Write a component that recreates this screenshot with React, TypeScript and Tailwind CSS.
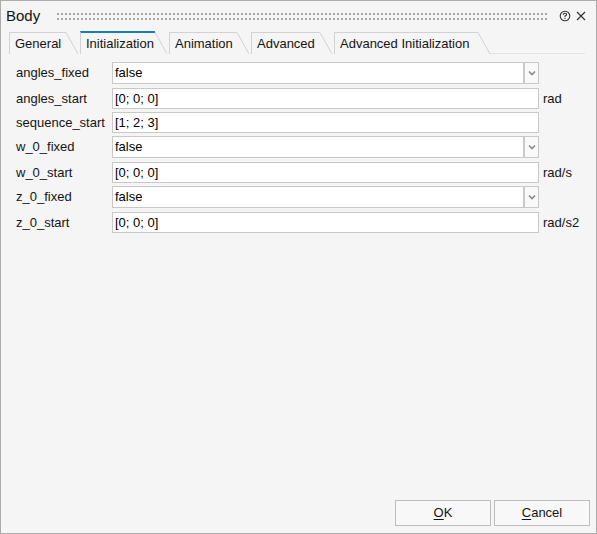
import React from 'react';

type Row = { label: string; value: string; kind: 'combo' | 'text'; unit?: string };

const rows: Row[] = [
  { label: 'angles_fixed', value: 'false', kind: 'combo' },
  { label: 'angles_start', value: '[0; 0; 0]', kind: 'text', unit: 'rad' },
  { label: 'sequence_start', value: '[1; 2; 3]', kind: 'text' },
  { label: 'w_0_fixed', value: 'false', kind: 'combo' },
  { label: 'w_0_start', value: '[0; 0; 0]', kind: 'text', unit: 'rad/s' },
  { label: 'z_0_fixed', value: 'false', kind: 'combo' },
  { label: 'z_0_start', value: '[0; 0; 0]', kind: 'text', unit: 'rad/s2' },
];

const tabs = [
  { label: 'General', w: 'w-[57px]' },
  { label: 'Initialization', w: 'w-[75px]', active: true },
  { label: 'Animation', w: 'w-[68px]' },
  { label: 'Advanced', w: 'w-[69px]' },
  { label: 'Advanced Initialization', w: 'w-[144px]' },
];

function Tab({ label, w, active }: { label: string; w: string; active?: boolean }) {
  const h = active ? 23 : 22;
  return (
    <div className={`flex ${active ? 'h-[23px]' : 'h-[22px]'}`}>
      <div
        className={`${w} flex items-center pl-[5px] pt-[1px] border-l border-[#d2d2d2] ${
          active ? 'border-t-2 border-t-[#1b7db6]' : 'border-t border-t-[#d2d2d2]'
        }`}
      >
        {label}
      </div>
      <svg width="12" height={h} className="shrink-0">
        <line x1="0" y1={active ? 1 : 0.5} x2="12" y2={h} stroke="#d2d2d2" strokeWidth="1" />
      </svg>
    </div>
  );
}

function Chevron() {
  return (
    <svg width="8" height="6" viewBox="0 0 8 6">
      <path d="M1 1.5 L4 4.5 L7 1.5" fill="none" stroke="#8a8a8a" strokeWidth="1.6" />
    </svg>
  );
}

export default function App() {
  return (
    <div
      className="w-[597px] h-[534px] border border-[#acacac] bg-[#f5f5f5] flex flex-col text-[13px] text-[#141414]"
      style={{ fontFamily: '"Liberation Sans", Arial, sans-serif' }}
    >
      {/* Title bar */}
      <div className="h-[30px] flex items-center pl-[5px] pr-[10px]">
        <span className="text-[15px]">Body</span>
        <svg className="ml-[17px] flex-1 h-[8px]">
          <defs>
            <pattern id="grip" width="4" height="5" patternUnits="userSpaceOnUse">
              <rect x="0" y="1" width="2" height="2" fill="#a6a6a6" />
            </pattern>
          </defs>
          <rect x="0" y="0" width="100%" height="8" fill="url(#grip)" />
        </svg>
        <svg width="12" height="12" viewBox="0 0 12 12" className="ml-[10px]">
          <circle cx="6" cy="6" r="4.8" fill="none" stroke="#333" strokeWidth="1.1" />
          <path d="M4.4 4.8 Q4.4 3.3 6 3.3 Q7.6 3.3 7.6 4.6 Q7.6 5.5 6 6.1 L6 7" fill="none" stroke="#333" strokeWidth="1.1" />
          <rect x="5.45" y="7.8" width="1.1" height="1.1" fill="#333" />
        </svg>
        <svg width="10" height="10" viewBox="0 0 10 10" className="ml-[5px]">
          <path d="M1 1 L9 9 M9 1 L1 9" stroke="#333" strokeWidth="1.2" />
        </svg>
      </div>

      {/* Tabs */}
      <div className="h-[23px] flex items-end ml-[8px] mr-[11px] gap-[2px]">
        {tabs.map(t => (
          <Tab key={t.label} label={t.label} w={t.w} active={t.active} />
        ))}
        <div className="flex-1 h-full border-b border-[#e2e2e2] -ml-[2px]" />
      </div>

      {/* Form */}
      <div className="flex-1 flex flex-col pt-[8px] pl-[15px]">
        {rows.map(r => (
          <div key={r.label} className={`flex items-start ${r.kind === 'combo' ? 'h-[26px]' : 'h-[24px]'}`}>
            <div className={`w-[96px] flex items-center ${r.kind === 'combo' ? 'h-[22px]' : 'h-[21px]'}`}>
              {r.label}
            </div>
            {r.kind === 'combo' ? (
              <div className="flex h-[22px]">
                <div className="w-[412px] h-full bg-white border border-[#c8c8c8] flex items-center pl-[2px] text-[#000]">
                  {r.value}
                </div>
                <div className="w-[15px] h-full bg-[#f9f9f9] border border-[#c8c8c8] flex items-center justify-center">
                  <Chevron />
                </div>
              </div>
            ) : (
              <div className="w-[427px] h-[21px] bg-white border border-[#c8c8c8] flex items-center pl-[2px] text-[#000]">
                {r.value}
              </div>
            )}
            {r.unit && (
              <div className="ml-[4px] h-[21px] flex items-center">{r.unit}</div>
            )}
          </div>
        ))}
      </div>

      {/* Buttons */}
      <div className="flex justify-end gap-[3px] pr-[6px] pb-[7px]">
        <button className="w-[96px] h-[26px] bg-[#f8f8f8] border border-[#bdbdbd]">
          <span className="underline underline-offset-2">O</span>K
        </button>
        <button className="w-[96px] h-[26px] bg-[#f8f8f8] border border-[#bdbdbd]">
          <span className="underline underline-offset-2">C</span>ancel
        </button>
      </div>
    </div>
  );
}
